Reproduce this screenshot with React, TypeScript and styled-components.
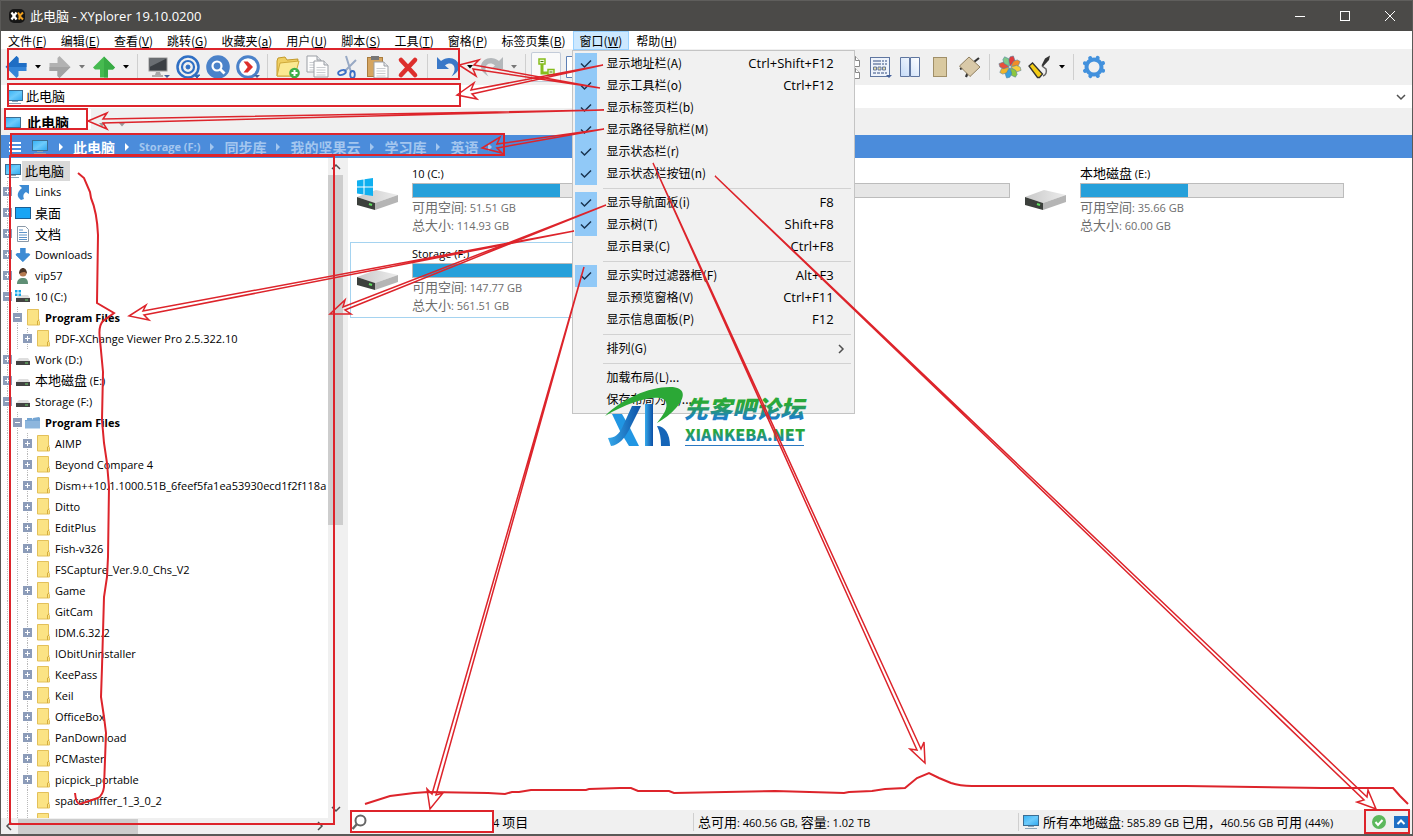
import React from "react";
import styled, { createGlobalStyle, css } from "styled-components";

const sans = `"Open Sans", "Noto Sans CJK SC", sans-serif`;
const cjkSans = `"Noto Sans CJK SC", "Noto Sans", sans-serif`;

const Global = createGlobalStyle`
  * { box-sizing: border-box; }
  body { margin: 0; background: #fff; font: 13px/20px ${cjkSans}; color: #000; }
  button, input { font: inherit; color: inherit; margin: 0; padding: 0; border: 0; background: none; }
  svg { display: block; flex: none; }
`;

const Window = styled.div`
  position: relative;
  display: flex;
  flex-direction: column;
  height: 100vh;
  overflow: hidden;
  border: solid #5a5957;
  border-width: 0 1px 2px;
`;

const TitleBar = styled.header`
  display: flex;
  align-items: center;
  flex: none;
  height: 31px;
  padding-left: 8px;
  gap: 5px;
  background: #4b4a48;
  border-top: 1px solid #5f5e5c;
  color: #fff;
`;
const TitleText = styled.h1`
  flex: 1;
  margin: 0;
  font: 13px/20px ${sans};
`;
const CaptionButtons = styled.div`
  display: flex;
`;
const CaptionButton = styled.button`
  display: flex;
  align-items: center;
  justify-content: center;
  width: 45px;
  height: 30px;
`;

const MenuBar = styled.nav`
  display: flex;
  flex: none;
  height: 18px;
  background: #fff;
`;
const MenuSlot = styled.div`
  position: relative;
`;
const MenuButton = styled.button<{ $open?: boolean }>`
  height: 19px;
  padding: 0 7px;
  font-size: 12px;
  line-height: 19px;
  white-space: nowrap;
  ${(p) => p.$open && css`background: #cce8ff; box-shadow: inset 0 0 0 1px #99d1ff;`}
`;
const Popup = styled.ul`
  position: absolute;
  z-index: 5;
  top: 19px;
  left: -1px;
  width: 283px;
  margin: 0;
  padding: 2px;
  list-style: none;
  background: #f1f1f1;
  border: 1px solid #c4c4c4;
`;
const PopupItem = styled.button`
  display: flex;
  align-items: center;
  width: 100%;
  height: 22px;
  padding-right: 18px;
  font-size: 12px;
  line-height: 20px;
`;
const SubArrow = styled.span`
  margin-right: -12px;
`;
const CheckCell = styled.span<{ $on?: boolean }>`
  display: flex;
  align-items: center;
  justify-content: center;
  width: 22px;
  height: 22px;
  margin-right: 10px;
  background: ${(p) => (p.$on ? "#91c9f7" : "transparent")};
`;
const ItemLabel = styled.span`
  flex: 1;
  height: 22px;
  text-align: left;
`;
const Shortcut = styled.span`
  height: 22px;
  font: 13px/20px ${sans};
`;
const Divider = styled.li`
  height: 7px;
  padding: 3px 1px 3px 28px;
  &::before { content: ""; display: block; height: 1px; background: #d2d2d2; }
`;

const ToolBar = styled.div`
  display: flex;
  align-items: center;
  flex: none;
  height: 36px;
  background: #f0f0f0;
`;
const ToolButton = styled.button<{ $pressed?: boolean }>`
  display: flex;
  align-items: center;
  justify-content: center;
  flex: none;
  width: 30px;
  height: 30px;
  ${(p) => p.$pressed && css`background: #fafafa; box-shadow: inset 0 0 0 1px #c3cbd8; border-radius: 2px;`}
`;
const DropButton = styled.button<{ $dim?: boolean }>`
  display: flex;
  align-items: center;
  justify-content: center;
  flex: none;
  width: 14px;
  height: 30px;
  color: ${(p) => (p.$dim ? "#777" : "#000")};
`;
const ToolRule = styled.span`
  flex: none;
  width: 1px;
  height: 26px;
  margin: 0 5px 0 4px;
  background: #cfcfcf;
`;

const AddressBar = styled.label`
  display: flex;
  align-items: center;
  flex: none;
  height: 23px;
  padding: 0 6px;
  gap: 3px;
  background: #fff;
`;
const AddressInput = styled.input`
  flex: 1;
  min-width: 0;
  height: 20px;
  padding-bottom: 2px;
  outline: 0;
`;

const TabStrip = styled.div`
  display: flex;
  flex: none;
  align-items: flex-start;
  height: 27px;
  padding: 1px 4px;
  background: #f0f0f0;
`;
const Tab = styled.button`
  display: flex;
  align-items: flex-start;
  gap: 6px;
  width: 86px;
  height: 20px;
  overflow: hidden;
  background: #fff;
  font-size: 14px;
  font-weight: 700;
  line-height: 27px;
  svg { margin-top: 7px; }
`;
const TabArrows = styled.button`
  display: flex;
  gap: 14px;
  padding: 14px 0 0 8px;
  color: #999;
`;

const CrumbBar = styled.nav`
  display: flex;
  align-items: center;
  flex: none;
  height: 23px;
  padding-left: 8px;
  gap: 10px;
  background: #4b8cdb;
  color: #fff;
`;
const Crumb = styled.a<{ $current?: boolean; $latin?: boolean }>`
  font-weight: 700;
  font-family: ${(p) => (p.$latin ? sans : cjkSans)};
  font-size: ${(p) => (p.$latin ? "11px" : "14px")};
  line-height: 20px;
  text-decoration: none;
  white-space: nowrap;
  color: ${(p) => (p.$current ? "#fff" : "#a3c6ef")};
`;
const CrumbIcons = styled.span`
  display: flex;
  align-items: center;
  gap: 11px;
`;

const Body = styled.main`
  display: flex;
  flex: 1;
  min-height: 0;
`;
const SidePane = styled.aside`
  display: grid;
  flex: none;
  width: 347px;
  padding-right: 5px;
  grid-template-columns: 1fr 15px;
  grid-template-rows: 1fr 16px;
  min-height: 0;
  background: #f0f0f0;
`;
const Tree = styled.ul`
  margin: 0;
  padding: 2px 0 0;
  min-height: 0;
  overflow: hidden;
  list-style: none;
  background: #fff;
`;
const dots = "repeating-linear-gradient(#b9b9b9 0 1px, transparent 1px 2px)";
const guideX = [6, 16, 26];
const TreeRow = styled.li<{ $depth: number }>`
  display: flex;
  align-items: center;
  height: 21px;
  padding-left: ${(p) => (p.$depth === 0 ? 4 : p.$depth * 10 - 8)}px;
  white-space: nowrap;
  background-repeat: no-repeat;
  background-size: 1px 100%;
  background-image: ${(p) => (p.$depth === 0 ? "none" : Array(p.$depth).fill(dots).join(","))};
  background-position: ${(p) => guideX.slice(0, Math.max(1, p.$depth)).map((x) => `${x}px 0`).join(",")};
`;
const Expander = styled.button<{ $empty?: boolean }>`
  width: 9px;
  height: 9px;
  margin-right: 3px;
  visibility: ${(p) => (p.$empty ? "hidden" : "visible")};
`;
const TreeLabel = styled.span<{ $bold?: boolean; $selected?: boolean }>`
  padding: 0 4px;
  line-height: 20px;
  font-weight: ${(p) => (p.$bold ? 700 : 400)};
  ${(p) => p.$selected && css`margin-left: 1px; padding: 0 6px 0 3px; background: #d9d9d9;`}
`;
const Latin = styled.span`
  font-family: ${sans};
  font-size: 11px;
`;
const VScroll = styled.div`
  display: flex;
  flex-direction: column;
  align-items: center;
  padding: 4px 0;
  min-height: 0;
`;
const VTrack = styled.div`
  flex: 1;
  width: 15px;
  padding-top: 3px;
  margin-bottom: 4px;
`;
const VThumb = styled.div`
  height: 56%;
  background: #cdcdcd;
`;
const HScroll = styled.div`
  display: flex;
  align-items: center;
  padding: 0 3px;
`;
const HTrack = styled.div`
  flex: 1;
  height: 15px;
  padding: 0 4px;
`;
const HThumb = styled.div`
  width: 41%;
  height: 15px;
  background: #cdcdcd;
`;

const RightPane = styled.section`
  display: flex;
  flex-direction: column;
  flex: 1;
  min-width: 0;
`;
const Drives = styled.div`
  display: grid;
  flex: 1;
  grid-template-columns: repeat(auto-fill, 334px);
  grid-auto-rows: 76px;
  gap: 4px 0;
  padding: 4px 0 0 2px;
  align-content: start;
`;
const DriveTile = styled.article<{ $focused?: boolean }>`
  display: grid;
  grid-template-columns: 44px 264px;
  column-gap: 12px;
  padding: 2px 5px;
  border: 1px solid ${(p) => (p.$focused ? "#a5d3f0" : "transparent")};
`;
const DriveIconCell = styled.div`
  padding-top: 12px;
`;
const DriveName = styled.div`
  height: 18px;
  line-height: 15px;
`;
const Meter = styled.div`
  height: 15px;
  border: 1px solid #bcbcbc;
  background: #e6e6e6;
`;
const MeterFill = styled.div`
  height: 13px;
  background: #26a0da;
`;
const DriveInfo = styled.div`
  line-height: 17px;
  color: #6d6d6d;
`;

const StatusBar = styled.footer`
  display: flex;
  align-items: center;
  flex: none;
  height: 24px;
  background: #f0f0f0;
  white-space: nowrap;
`;
const Filter = styled.label`
  display: flex;
  align-items: center;
  width: 141px;
  height: 22px;
  margin-left: 3px;
  background: #fff;
`;
const FilterInput = styled.input`
  flex: 1;
  min-width: 0;
  outline: 0;
`;
const StatusCell = styled.div<{ $w?: number }>`
  display: flex;
  align-items: center;
  gap: 4px;
  height: 18px;
  flex: ${(p) => (p.$w ? `0 0 ${p.$w}px` : "1")};
  padding-left: 4px;
  border-left: 1px solid #cfcfcf;
`;
const FirstCell = styled(StatusCell)`
  padding-left: 1px;
  border-left: 0;
`;
const StatusButtons = styled.div`
  display: flex;
  align-items: center;
  justify-content: flex-end;
  gap: 8px;
  width: 47px;
  padding-right: 4px;
`;

const Overlay = styled.svg`
  position: absolute;
  z-index: 10;
  top: 0;
  left: -1px;
  pointer-events: none;
`;

/* ---------- icons ---------- */

const Monitor = ({ w = 16 }: { w?: number }) => (
  <svg width={w} height={w} viewBox="0 0 16 16">
    <defs>
      <linearGradient id="scr" x1="0" y1="0" x2="1" y2="1">
        <stop offset="0" stopColor="#33b1f5" />
        <stop offset=".5" stopColor="#6dcbfb" />
        <stop offset="1" stopColor="#2fa8ef" />
      </linearGradient>
    </defs>
    <rect x=".5" y="1.5" width="15" height="10" fill="url(#scr)" stroke="#3c6e93" />
    <path d="M5 12.500h6M2 14.500h12" stroke="#8da6b8" />
  </svg>
);
const AppLogo = () => (
  <svg width="16" height="16" viewBox="0 0 16 16">
    <rect width="16" height="14" y="1" rx="5" fill="#161616" />
    <path d="M2.500 4.500l5 7M7.500 4.500l-5 7" stroke="#fff" strokeWidth="2.200" />
    <path d="M9 4.500l2 3.500-1 3.500M14 4.500L10.500 8l3.500 3.500" fill="none" stroke="#f0a020" strokeWidth="2" />
  </svg>
);
const Drop = () => (
  <svg width="6" height="4" viewBox="0 0 6 4"><path d="M0 0h6L3 3.500z" fill="currentColor" /></svg>
);
const Chevron = ({ dir = "down", c = "#505050" }: { dir?: "up" | "down" | "left" | "right"; c?: string }) => {
  const d = { down: "M1 3l4 4 4-4", up: "M1 7l4-4 4 4", left: "M7 1L3 5l4 4", right: "M3 1l4 4-4 4" }[dir];
  return <svg width="10" height="10" viewBox="0 0 10 10"><path d={d} fill="none" stroke={c} strokeWidth="1.500" /></svg>;
};
const CrumbArrow = ({ dim }: { dim?: boolean }) => (
  <svg width="4" height="8" viewBox="0 0 4 8"><path d="M0 0l4 4-4 4z" fill={dim ? "#a3c6ef" : "#fff"} /></svg>
);
const Arrow = ({ rot, c, size = 24 }: { rot: number; c: [string, string]; size?: number }) => (
  <svg width={size} height={size} viewBox="0 0 24 24">
    <g transform={`rotate(${rot} 12 12)`}>
      <path d="M12 1.500L1 12.500l2 2h5V22.500h8v-8h5l2-2z" fill={c[0]} />
      <path d="M12 1.500v21h4v-8h5l2-2z" fill={c[1]} />
    </g>
  </svg>
);
const Corner = () => <path d="M18 20h6l-3 3z" fill="#44619b" />;
const DarkMonitor = () => (
  <svg width="24" height="24" viewBox="0 0 24 24">
    <rect x="3" y="3" width="18" height="13" fill="#3b3f44" stroke="#9a9a9a" />
    <path d="M3.500 3.500h17L3.500 12z" fill="#6a6e73" />
    <path d="M10 17h4l1 3H9z" fill="#a9a9a9" /><path d="M6 21h11" stroke="#999" strokeWidth="1.500" />
    <Corner />
  </svg>
);
const Target = () => (
  <svg width="24" height="24" viewBox="0 0 24 24" fill="none" stroke="#2f6fc4">
    <circle cx="12" cy="12" r="10.500" strokeWidth="2.500" /><circle cx="12" cy="12" r="6" strokeWidth="2.200" />
    <circle cx="12" cy="12" r="2" fill="#2f6fc4" /><Corner />
  </svg>
);
const SearchRound = () => (
  <svg width="24" height="24" viewBox="0 0 24 24" fill="none">
    <circle cx="12" cy="12" r="11.800" fill="#4b82c9" /><circle cx="11" cy="11" r="4.500" stroke="#fff" strokeWidth="2.200" />
    <path d="M14.500 14.500l4 4" stroke="#fff" strokeWidth="2.800" />
  </svg>
);
const GoRound = () => (
  <svg width="24" height="24" viewBox="0 0 24 24">
    <circle cx="12" cy="12" r="10.300" fill="#fff" stroke="#4b82c9" strokeWidth="3" />
    <path d="M7.500 6.500h4.200l5.300 5.500-5.300 5.500H7.500l4.200-5.500z" fill="#dd2f2c" /><Corner />
  </svg>
);
const NewFolder = () => (
  <svg width="24" height="24" viewBox="0 0 24 24">
    <path d="M1 21V6l1-3 7-1 2 3 11-1-1 4-2 13z" fill="#efcf62" stroke="#c39a2b" />
    <path d="M1 21L4 8l19-2-4 15z" fill="#fbe992" stroke="#cfa93a" />
    <circle cx="18.500" cy="18" r="5.300" fill="#3fae49" /><path d="M18.500 15v6M15.500 18h6" stroke="#fff" strokeWidth="2" />
  </svg>
);
const Page = ({ x, y }: { x: number; y: number }) => (
  <g transform={`translate(${x} ${y})`}>
    <path d="M0 0h10l4 4v12H0z" fill="#fdfdfd" stroke="#9b9fa5" /><path d="M10 0v4h4" fill="#e4e6ea" stroke="#9b9fa5" />
    <path d="M2.500 6.500h9M2.500 9h9M2.500 11.500h9M2.500 14h9" stroke="#c3c6cb" strokeWidth=".9" />
  </g>
);
const Copy = () => (
  <svg width="24" height="24" viewBox="0 0 24 24"><Page x={1} y={1} /><Page x={8} y={6} /></svg>
);
const Scissors = () => (
  <svg width="24" height="24" viewBox="0 0 24 24" fill="none">
    <path d="M10 1l5 16M20 5L8 17" stroke="#98a9c4" strokeWidth="2" />
    <ellipse cx="6" cy="17.500" rx="4" ry="2.300" stroke="#3b6fc6" strokeWidth="1.800" transform="rotate(-20 6 17.500)" />
    <ellipse cx="16.500" cy="19.500" rx="2.300" ry="3.500" stroke="#3b6fc6" strokeWidth="1.800" />
  </svg>
);
const Paste = () => (
  <svg width="24" height="24" viewBox="0 0 24 24">
    <rect x="1.500" y="2.500" width="15" height="19" fill="#d5a560" stroke="#a97c3e" /><rect x="5" y="1" width="8" height="4" fill="#777" />
    <Page x={8} y={7} />
  </svg>
);
const Delete = () => (
  <svg width="24" height="24" viewBox="0 0 24 24"><path d="M5 5l14 15M19 5L5 20" stroke="#dd2f2c" strokeWidth="4.600" strokeLinecap="round" /></svg>
);
const Undo = ({ c, flip }: { c: string; flip?: boolean }) => (
  <svg width="24" height="24" viewBox="0 0 24 24">
    <g transform={flip ? "translate(24 0) scale(-1 1)" : undefined}>
      <path d="M1 2v12h12L9 10.500C13 7 18 8.500 18.500 13c.3 3-.8 5.500-3 8.500 5-3 8-7 7.500-11C22 3.500 12 0 5 6z" fill={c} />
    </g>
  </svg>
);
const TreeIcon = () => (
  <svg width="24" height="24" viewBox="0 0 24 24" fill="none" stroke="#86bd1c">
    <path d="M8 9v9h6" strokeWidth="3" />
    <rect x="5" y="4" width="6" height="5" fill="#f2f9e2" strokeWidth="1.500" /><rect x="14" y="14.500" width="6" height="5" fill="#f2f9e2" strokeWidth="1.500" />
    <path d="M6.500 6.500h3M15.500 17h3" stroke="#4a7d10" />
  </svg>
);
const Pages2 = () => (
  <svg width="24" height="24" viewBox="0 0 24 24" fill="#fff" stroke="#888">
    <path d="M11.500 1.500h6l4 4v6h-10zM11.500 13.500h6l4 4v6h-10z" /><path d="M17.500 1.500v4h4M17.500 13.500v4h4" />
    <path d="M2.500 1.500h8v21h-8z" stroke="#5d7fb5" />
  </svg>
);
const Grid = () => (
  <svg width="24" height="24" viewBox="0 0 24 24">
    <rect x="2.500" y="2.500" width="19" height="19" fill="#eef3fb" stroke="#5f76a0" />
    <path d="M5 6h8m1 0h2m1 0h2M5 9h8m1 0h2m1 0h2M5 18h3m1 0h3m1 0h3m1 0h2" stroke="#7185aa" strokeWidth="1.600" />
    <path d="M5.500 12h3v3h-3zM10 12h3v3h-3zM14.500 12h3v3h-3z" fill="#e6dca8" stroke="#66799b" /><Corner />
  </svg>
);
const Panes = () => (
  <svg width="24" height="24" viewBox="0 0 24 24">
    <defs><linearGradient id="pn" x1="0" y1="1" x2="1" y2="0"><stop offset="0" stopColor="#c4daf7" /><stop offset="1" stopColor="#fff" /></linearGradient></defs>
    <path d="M2.500 2.500h9v19h-9zM12.500 2.500h9v19h-9z" fill="url(#pn)" stroke="#5f76a0" />
  </svg>
);
const Board = () => (
  <svg width="24" height="24" viewBox="0 0 24 24"><rect x="5.500" y="2.500" width="13" height="19" fill="#d9c9a0" stroke="#a08f68" /></svg>
);
const TiltBoard = () => (
  <svg width="24" height="24" viewBox="0 0 24 24">
    <path d="M16 7l5-4M2 14l5-2M8 22l2-5" stroke="#333" strokeWidth="2.200" />
    <path d="M11 2l11 10-10 9.500L1.500 11z" fill="#d9c9a8" stroke="#907f60" />
  </svg>
);
const Pinwheel = () => {
  const cols = ["#e23b3b", "#f28c28", "#f6cf3a", "#8cc63f", "#3aa0dc", "#f0b429", "#e8503a", "#7fc98a"];
  return (
    <svg width="24" height="24" viewBox="0 0 24 24">
      {cols.map((c, i) => (
        <path key={c} transform={`rotate(${i * 45 + 12} 12 12)`} d="M12 11L9 6l1-4 3-1.500 2.500 4z" fill={c} stroke="#4d7f9b" strokeWidth=".5" />
      ))}
    </svg>
  );
};
const Roller = () => (
  <svg width="24" height="24" viewBox="0 0 24 24" fill="none">
    <path d="M22 .5l-5 3-3.500 7 1.500 1 6-6.500z" fill="#333" /><path d="M14 11l4 3c1 3 0 6-3 7" stroke="#666" strokeWidth="1.500" />
    <path d="M1 11l3.500-3 10 11-3 3.500h-2z" fill="#f3cc16" stroke="#333" strokeWidth="1.300" />
  </svg>
);
const Gear = () => (
  <svg width="24" height="24" viewBox="0 0 24 24" fill="none" stroke="#4291dd">
    <circle cx="12" cy="12" r="7.500" strokeWidth="4" />
    {[0, 45, 90, 135].map((a) => (
      <path key={a} transform={`rotate(${a + 22} 12 12)`} d="M12 2.200v1M12 20.800v1" strokeWidth="4" strokeLinecap="round" />
    ))}
  </svg>
);
const Box = ({ open }: { open?: boolean }) => (
  <svg width="9" height="9" viewBox="0 0 9 9">
    <rect width="9" height="9" fill="#8c9cb9" /><path d={open ? "M2 4.500h5" : "M2 4.500h5M4.500 2v5"} stroke="#fff" />
  </svg>
);
const Folder = () => (
  <svg width="16" height="17" viewBox="0 0 16 17">
    <path d="M2.500 .5h11v11l1 1v3.500h-12z" fill="#fbe384" stroke="#e3c05a" /><path d="M12.500 16v-4l2-1" fill="none" stroke="#d4ac3b" />
  </svg>
);
const BlueFolder = () => (
  <svg width="16" height="16" viewBox="0 0 16 16"><path d="M0 13V5h2V3h5l1 2V3l6-1 1 1v10z" fill="#74a5d3" /><path d="M0 6h15v7.500H0z" fill="#8db6dd" /></svg>
);
const SmallDrive = ({ win }: { win?: boolean }) => (
  <svg width="16" height="16" viewBox="0 0 16 16">
    <path d="M4 6h9l2 3H1z" fill="#dedede" /><path d="M1 9h14v4H1z" fill="#424242" /><path d="M10 11h3" stroke="#6fd36f" />
    {win && <path d="M0 1h2.500v2.500H0zM3.500 1H6v2.500H3.500zM0 4.500h2.500V7H0zM3.500 4.500H6V7H3.500z" fill="#19a7e8" />}
  </svg>
);
const LinkIcon = () => (
  <svg width="16" height="16" viewBox="0 0 16 16"><path d="M4 1h10v9l-3-2c-3 2-3 4-2 7l-3 1C2 13 1 9 7 4z" fill="#3d8bd4" /></svg>
);
const Desktop = () => (
  <svg width="16" height="16" viewBox="0 0 16 16"><rect x=".5" y="2.500" width="15" height="11" fill="#18a5f5" stroke="#1c5f94" /></svg>
);
const Doc = () => (
  <svg width="16" height="16" viewBox="0 0 16 16">
    <path d="M2.500 .5h8l3 3v12h-11z" fill="#fff" stroke="#8b99a8" /><path d="M4 4h4M4 6.500h8M4 9h8M4 11.500h8M4 13.500h8" stroke="#5c93c9" />
  </svg>
);
const User = () => (
  <svg width="16" height="16" viewBox="0 0 16 16">
    <path d="M2 16c0-5 3-6 6-6s5 1 5 6z" fill="#5f8f75" /><circle cx="8" cy="5" r="3.500" fill="#b57a50" /><path d="M4 6c0-8 8-8 8 0-2-3-5-2-8 0z" fill="#4a3527" />
  </svg>
);
const BigDrive = ({ win }: { win?: boolean }) => (
  <svg width="44" height="36" viewBox="0 0 44 36">
    <defs><linearGradient id="dr" x1="0" y1="0" x2="1" y2="0"><stop offset="0" stopColor="#c9c9c9" /><stop offset="1" stopColor="#ececec" /></linearGradient></defs>
    <path d="M1 20L20 13l22 5-23 8z" fill="url(#dr)" />
    <path d="M19 26l23-8v7l-23 8z" fill="#b5b5b5" />
    <path d="M1 20l18 6v7L1 28z" fill="#3c403c" /><path d="M13 27l3 1" stroke="#5fe05f" strokeWidth="2" />
    {win && <path d="M1 3.500l6.500-1v7H1zM8.500 2.300L17 1v8.500H8.500zM1 10.500h6.500v7L1 16.500zM8.500 10.500H17V19l-8.500-1.300z" fill="#10b0f0" />}
  </svg>
);

/* ---------- data ---------- */

const menus: [string, string][] = [
  ["文件", "F"], ["编辑", "E"], ["查看", "V"], ["跳转", "G"], ["收藏夹", "a"], ["用户", "U"],
  ["脚本", "S"], ["工具", "T"], ["窗格", "P"], ["标签页集", "B"], ["窗口", "W"], ["帮助", "H"],
];

type Item = { label: string; keys?: string; on?: boolean; sub?: boolean } | null;
const windowMenu: Item[] = [
  { label: "显示地址栏(A)", keys: "Ctrl+Shift+F12", on: true },
  { label: "显示工具栏(o)", keys: "Ctrl+F12", on: true },
  { label: "显示标签页栏(b)", on: true },
  { label: "显示路径导航栏(M)", on: true },
  { label: "显示状态栏(r)", on: true },
  { label: "显示状态栏按钮(n)", on: true },
  null,
  { label: "显示导航面板(i)", keys: "F8", on: true },
  { label: "显示树(T)", keys: "Shift+F8", on: true },
  { label: "显示目录(C)", keys: "Ctrl+F8" },
  null,
  { label: "显示实时过滤器框(F)", keys: "Alt+F3", on: true },
  { label: "显示预览窗格(V)", keys: "Ctrl+F11" },
  { label: "显示信息面板(P)", keys: "F12" },
  null,
  { label: "排列(G)", sub: true },
  null,
  { label: "加载布局(L)..." },
  { label: "保存布局为(S)..." },
];

type Node = { d: number; t: string; i: React.ReactNode; open?: boolean; leaf?: boolean; bold?: boolean };
const sub = (t: string, leaf = false): Node => ({ d: 3, t, i: <Folder />, leaf });
const tree: Node[] = [
  { d: 0, t: "此电脑", i: <Monitor /> },
  { d: 1, t: "Links", i: <LinkIcon /> },
  { d: 1, t: "桌面", i: <Desktop /> },
  { d: 1, t: "文档", i: <Doc /> },
  { d: 1, t: "Downloads", i: <Arrow rot={180} c={["#3d8bd4", "#3d8bd4"]} size={16} /> },
  { d: 1, t: "vip57", i: <User /> },
  { d: 1, t: "10 (C:)", i: <SmallDrive win />, open: true },
  { d: 2, t: "Program Files", i: <Folder />, open: true, bold: true },
  sub("PDF-XChange Viewer Pro 2.5.322.10"),
  { d: 1, t: "Work (D:)", i: <SmallDrive /> },
  { d: 1, t: "本地磁盘 (E:)", i: <SmallDrive /> },
  { d: 1, t: "Storage (F:)", i: <SmallDrive />, open: true },
  { d: 2, t: "Program Files", i: <BlueFolder />, open: true, bold: true },
  sub("AIMP"), sub("Beyond Compare 4"), sub("Dism++10.1.1000.51B_6feef5fa1ea53930ecd1f2f118a"),
  sub("Ditto"), sub("EditPlus"), sub("Fish-v326"), sub("FSCapture_Ver.9.0_Chs_V2", true), sub("Game"),
  sub("GitCam", true), sub("IDM.6.32.2"), sub("IObitUninstaller"), sub("KeePass"), sub("Keil"),
  sub("OfficeBox"), sub("PanDownload"), sub("PCMaster"), sub("picpick_portable"), sub("spacesniffer_1_3_0_2", true),
  sub("", true),
];

const drives = [
  { name: "10 (C:)", free: "51.51 GB", size: "114.93 GB", used: 56, win: true },
  { name: "Work (D:)", used: 30 },
  { name: "本地磁盘 (E:)", free: "35.66 GB", size: "60.00 GB", used: 41 },
  { name: "Storage (F:)", free: "147.77 GB", size: "561.51 GB", used: 74, focused: true },
];

const crumbs = ["此电脑", "Storage (F:)", "同步库", "我的坚果云", "学习库", "英语"];

/* Chinese runs keep the list size; Latin runs use the smaller interface face. */
const Mixed = ({ children }: { children: string }) => (
  <span>
    {children.split(/([\u3000-\u9fff\uff00-\uffef]+)/).map((run, i) =>
      i % 2 ? run : run && <Latin key={i}>{run}</Latin>
    )}
  </span>
);

/* Hollow pointer that widens from its tail to a barbed head. */
const pointer = (x1: number, y1: number, x2: number, y2: number) => {
  const len = Math.hypot(x2 - x1, y2 - y1);
  const ux = (x2 - x1) / len, uy = (y2 - y1) / len;
  const at = (back: number, side: number) =>
    `${Math.round(x2 - ux * back - uy * side)} ${Math.round(y2 - uy * back + ux * side)}`;
  return `M${x1} ${y1}L${at(15, 2)}L${at(19, 8)}L${x2} ${y2}L${at(19, -8)}L${at(15, -2)}Z`;
};
const pointers: [number, number, number, number][] = [
  [603, 65, 457, 95], [600, 88, 459, 65], [604, 110, 88, 121], [604, 129, 482, 148],
  [606, 205, 330, 314], [574, 231, 129, 316], [584, 267, 430, 809], [653, 163, 925, 763], [715, 176, 1376, 809],
];
const frames: [number, number, number, number][] = [
  [8, 49, 451, 30], [8, 84, 452, 22], [5, 109, 82, 20], [11, 134, 493, 21], [10, 156, 324, 668], [351, 811, 142, 21], [1365, 810, 44, 23],
];
const treeBrace =
  "M78 173L84 178 90 192 91 198Q97 212 98 235L97 303 114 313 103 321Q98 326 100 340L103 372 102 420 104 443 107 463 109 487 108 557 107 577 104 597 102 667 101 697 104 717 106 733 104 787Q103 795 98 798L80 804Q76 804 75 793";
const statusBrace =
  "M365 804L390 796 414 793 428 792 488 793 505 794 512 792 519 792 531 790 586 790 589 789 620 788 631 788 638 791 669 791 674 793 775 791 844 793 849 792 872 791 885 789 905 788 917 778 929 773 939 778 951 783Q960 786 972 786L1186 786 1322 788 1393 788 1400 796 1408 804";

const Annotations = () => (
  <Overlay width="1413" height="836" viewBox="0 0 1413 836" fill="none" stroke="#dd242b">
    <defs>
      <linearGradient id="gb" x1="0" y1="0" x2="0" y2="1"><stop offset=".4" stopColor="#2aa838" /><stop offset=".8" stopColor="#1d7fc8" /></linearGradient>
      <linearGradient id="bl" x1="0" y1="0" x2="1" y2="0"><stop offset="0" stopColor="#35a8ea" /><stop offset="1" stopColor="#0c4fa5" /></linearGradient>
    </defs>
    <g stroke="none">
      <path d="M605 416C622 399 648 387 670 387c16 0 16 10 6 21-5 6-12 11-19 15 7-9 11-15 9-21-4-9-32-3-61 14z" fill="#2ba836" />
      <path d="M612 414h10l7 12 10 20h-10l-8-13z" fill="#2196e3" />
      <path d="M632 406h9l-12 24c-5 9-10 15-18 16l-3-8c7 0 11-4 14-10z" fill="url(#bl)" />
      <path d="M645 404h8v42h-8z" fill="url(#bl)" />
      <path d="M657 426c8 0 13 8 13 20h-9c0-8-1-14-4-20z" fill="#1565b8" />
      <text x="684" y="418" fontSize="24" fontWeight="900" fontStyle="italic" fontFamily='"Noto Sans CJK SC", sans-serif' fill="url(#gb)">先客吧论坛</text>
      <text x="685" y="441" fontSize="16" fontWeight="900" fontFamily='"Noto Sans CJK SC", sans-serif' fill="url(#gb)">XIANKEBA.NET</text>
      <path d="M685 445.500h119" stroke="#2b78c2" />
    </g>
    {frames.map(([x, y, w, h]) => <rect key={`${x}-${y}`} x={x} y={y} width={w} height={h} strokeWidth="2" />)}
    {pointers.map((p) => <path key={p.join()} d={pointer(...p)} strokeWidth="1.500" />)}
    <path d={treeBrace} strokeWidth="2" />
    <path d={statusBrace} strokeWidth="2" />
  </Overlay>
);

const Check = () => (
  <svg width="12" height="10" viewBox="0 0 12 10"><path d="M1 4.500L4.500 8 11 1.500" fill="none" stroke="#1a3550" strokeWidth="1.500" /></svg>
);

const WindowMenu = () => (
  <Popup>
    {windowMenu.map((m, i) =>
      m === null ? <Divider key={i} role="separator" /> : (
        <li key={i}>
          <PopupItem>
            <CheckCell $on={m.on}>{m.on && <Check />}</CheckCell>
            <ItemLabel>{m.label}</ItemLabel>
            {m.keys && <Shortcut>{m.keys}</Shortcut>}
            {m.sub && <SubArrow><Chevron dir="right" /></SubArrow>}
          </PopupItem>
        </li>
      )
    )}
  </Popup>
);

const Tool = ({ label, pressed, children }: { label: string; pressed?: boolean; children: React.ReactNode }) => (
  <ToolButton aria-label={label} $pressed={pressed}>{children}</ToolButton>
);
const More = ({ dim }: { dim?: boolean }) => <DropButton aria-label="更多" $dim={dim}><Drop /></DropButton>;

export default function App() {
  return (
    <>
      <Global />
      <Window>
        <TitleBar>
          <AppLogo />
          <TitleText>此电脑 - XYplorer 19.10.0200</TitleText>
          <CaptionButtons>
            <CaptionButton aria-label="最小化"><svg width="10" height="10"><path d="M0 5.500h10" stroke="#fff" /></svg></CaptionButton>
            <CaptionButton aria-label="最大化"><svg width="10" height="10"><rect x=".5" y=".5" width="9" height="9" fill="none" stroke="#fff" /></svg></CaptionButton>
            <CaptionButton aria-label="关闭"><svg width="10" height="10"><path d="M0 0l10 10M10 0L0 10" stroke="#fff" /></svg></CaptionButton>
          </CaptionButtons>
        </TitleBar>

        <MenuBar>
          {menus.map(([name, key]) => (
            <MenuSlot key={key}>
              <MenuButton $open={key === "W"}>{name}(<u>{key}</u>)</MenuButton>
              {key === "W" && <WindowMenu />}
            </MenuSlot>
          ))}
        </MenuBar>

        <ToolBar>
          <Tool label="后退"><Arrow rot={-90} c={["#3585d8", "#1f6dc4"]} /></Tool><More />
          <Tool label="前进"><Arrow rot={90} c={["#b2b2b2", "#a2a2a2"]} /></Tool><More dim />
          <Tool label="向上"><Arrow rot={0} c={["#46ba50", "#38ab45"]} /></Tool><More />
          <ToolRule />
          <Tool label="电脑"><DarkMonitor /></Tool>
          <Tool label="定位"><Target /></Tool>
          <Tool label="查找"><SearchRound /></Tool>
          <Tool label="转到"><GoRound /></Tool>
          <ToolRule />
          <Tool label="新建文件夹"><NewFolder /></Tool>
          <Tool label="复制"><Copy /></Tool>
          <Tool label="剪切"><Scissors /></Tool>
          <Tool label="粘贴"><Paste /></Tool>
          <Tool label="删除"><Delete /></Tool>
          <ToolRule />
          <Tool label="撤销"><Undo c="#3a78c8" /></Tool><More />
          <Tool label="重做"><Undo c="#b4b8bb" flip /></Tool><More dim />
          <ToolRule />
          <Tool label="树" pressed><TreeIcon /></Tool>
          <Tool label="目录"><Pages2 /></Tool>
          <Tool label="预览"><Panes /></Tool>
          <Tool label="信息"><Board /></Tool>
          <ToolRule />
          <Tool label="视图"><Grid /></Tool><More />
          <Tool label="排序"><Grid /></Tool>
          <Tool label="筛选"><Board /></Tool>
          <ToolRule />
          <Tool label="标签"><Pages2 /></Tool>
          <Tool label="列表"><Grid /></Tool>
          <Tool label="分组"><Pages2 /></Tool>
          <Tool label="详细"><Grid /></Tool>
          <Tool label="双窗格"><Panes /></Tool>
          <Tool label="面板"><Board /></Tool>
          <Tool label="旋转"><TiltBoard /></Tool>
          <ToolRule />
          <Tool label="颜色"><Pinwheel /></Tool>
          <Tool label="粉刷"><Roller /></Tool><More />
          <ToolRule />
          <Tool label="设置"><Gear /></Tool>
        </ToolBar>

        <AddressBar>
          <Monitor />
          <AddressInput aria-label="地址" defaultValue="此电脑" />
          <Chevron />
        </AddressBar>

        <TabStrip>
          <Tab><Monitor />此电脑</Tab>
          <TabArrows aria-label="标签列表"><Drop /><Drop /></TabArrows>
        </TabStrip>

        <CrumbBar>
          <CrumbIcons>
            <svg width="12" height="12"><path d="M0 2h12M0 6h12M0 10h12" stroke="#fff" strokeWidth="2" /></svg>
            <Monitor />
            <CrumbArrow />
          </CrumbIcons>
          {crumbs.map((c, i) => (
            <React.Fragment key={c}>
              <Crumb href="#" $current={i === 0} $latin={i === 1}>{c}</Crumb>
              <CrumbArrow dim={i > 0} />
            </React.Fragment>
          ))}
        </CrumbBar>

        <Body>
          <SidePane>
            <Tree>
              {tree.map((n, i) => (
                <TreeRow key={i} $depth={n.d}>
                  {n.d > 0 && <Expander $empty={n.leaf} aria-label={n.open ? "折叠" : "展开"}><Box open={n.open} /></Expander>}
                  {n.i}
                  <TreeLabel $bold={n.bold} $selected={n.d === 0}><Mixed>{n.t}</Mixed></TreeLabel>
                </TreeRow>
              ))}
            </Tree>
            <VScroll>
              <Chevron dir="up" />
              <VTrack><VThumb /></VTrack>
              <Chevron />
            </VScroll>
            <HScroll>
              <Chevron dir="left" />
              <HTrack><HThumb /></HTrack>
              <Chevron dir="right" />
            </HScroll>
          </SidePane>

          <RightPane>
            <Drives>
              {drives.map((d) => (
                <DriveTile key={d.name} $focused={d.focused}>
                  <DriveIconCell><BigDrive win={d.win} /></DriveIconCell>
                  <div>
                    <DriveName><Mixed>{d.name}</Mixed></DriveName>
                    <Meter><MeterFill style={{ width: `${d.used}%` }} /></Meter>
                    {d.free && <DriveInfo><Mixed>{`可用空间: ${d.free}`}</Mixed></DriveInfo>}
                    {d.size && <DriveInfo><Mixed>{`总大小: ${d.size}`}</Mixed></DriveInfo>}
                  </div>
                </DriveTile>
              ))}
            </Drives>
            <StatusBar>
              <Filter>
                <svg width="16" height="18" viewBox="0 0 16 18" fill="none" stroke="#666">
                  <circle cx="9.500" cy="7.500" r="5" strokeWidth="2" /><path d="M6 11l-4.500 5" strokeWidth="2.500" />
                </svg>
                <FilterInput aria-label="过滤器" />
              </Filter>
              <FirstCell $w={201}><Mixed>4 项目</Mixed></FirstCell>
              <StatusCell><Mixed>总可用: 460.56 GB, 容量: 1.02 TB</Mixed></StatusCell>
              <StatusCell $w={347}><Monitor /><Mixed>所有本地磁盘: 585.89 GB 已用，460.56 GB 可用 (44%)</Mixed></StatusCell>
              <StatusButtons>
                <svg width="14" height="14"><circle cx="7" cy="7" r="7" fill="#5cb85c" /><path d="M3.500 7l2.500 3 4.500-5" fill="none" stroke="#fff" strokeWidth="2" /></svg>
                <svg width="14" height="12"><rect width="14" height="12" fill="#1f6fc5" /><path d="M3.500 8L7 4.500 10.500 8" fill="none" stroke="#fff" strokeWidth="2" /></svg>
              </StatusButtons>
            </StatusBar>
          </RightPane>
        </Body>
        <Annotations />
      </Window>
    </>
  );
}
